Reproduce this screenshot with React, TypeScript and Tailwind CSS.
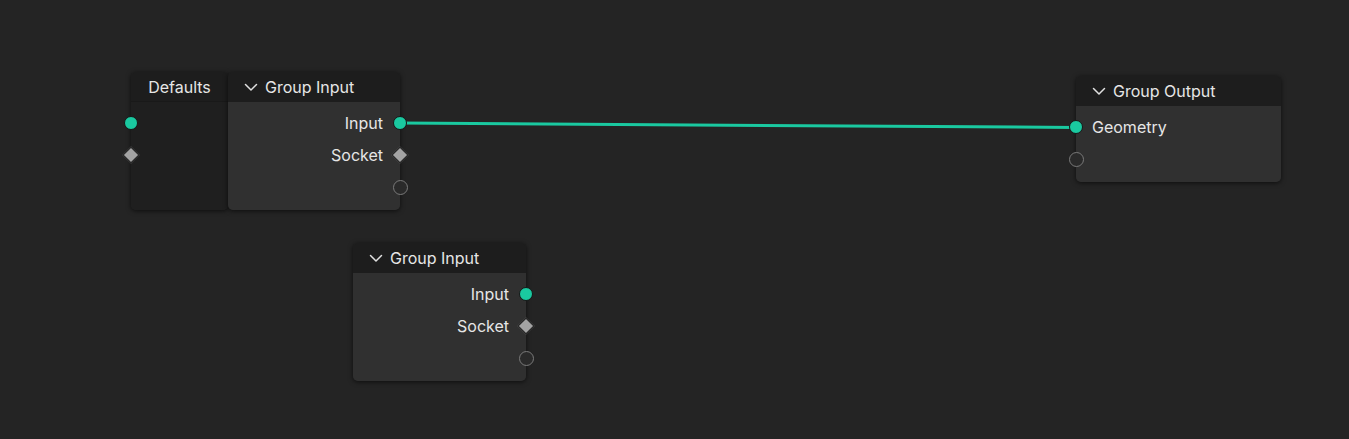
import React from 'react';

type Socket = { label?: string; kind: 'geo' | 'diamond' | 'empty' };

const TEAL = '#1ac9a0';

const SocketDot: React.FC<{ kind: Socket['kind'] }> = ({ kind }) => {
    if (kind === 'geo') {
        return <span className="block w-[14px] h-[14px] rounded-full bg-[#1ac9a0] border border-[#161616]" />;
    }
    if (kind === 'diamond') {
        return <span className="block w-[12px] h-[12px] rotate-45 bg-[#a3a3a3] border border-[#1a1a1a]" />;
    }
    return <span className="block w-[15px] h-[15px] rounded-full border-[1.5px] border-[#7a7a7a] bg-[#2a2a2a]" />;
};

const Chevron = () => (
    <svg width="14" height="14" viewBox="0 0 14 14" className="shrink-0">
        <path d="M1.5 4.5 L7 10 L12.5 4.5" fill="none" stroke="#e0e0e0" strokeWidth="1.5" strokeLinecap="round" strokeLinejoin="round" />
    </svg>
);

interface NodeProps {
    title: string;
    x: number;
    y: number;
    width: number;
    sockets: Socket[];
    side: 'left' | 'right';
}

const Node: React.FC<NodeProps> = ({ title, x, y, width, sockets, side }) => (
    <div
        className="absolute rounded-[5px] shadow-[0_1px_5px_rgba(0,0,0,0.65)]"
        style={{ left: x, top: y, width }}
    >
        <div className="h-[30px] bg-[#1d1d1d] rounded-t-[5px] flex items-center gap-[7px] pl-[16px] text-[16px] text-[#e6e6e6]">
            <Chevron />
            <span>{title}</span>
        </div>
        <div className="bg-[#303030] rounded-b-[5px] pt-[5px] pb-[7px]">
            {sockets.map((s, i) => (
                <div
                    key={i}
                    className={`relative h-[32px] flex items-center text-[16px] text-[#e6e6e6] ${
                        side === 'right' ? 'justify-end pr-[17px]' : 'justify-start pl-[16px]'
                    }`}
                >
                    {s.label && <span>{s.label}</span>}
                    <span
                        className={`absolute top-1/2 -translate-y-1/2 flex items-center justify-center w-[16px] h-[16px] ${
                            side === 'right' ? 'right-[-8px]' : 'left-[-8px]'
                        }`}
                    >
                        <SocketDot kind={s.kind} />
                    </span>
                </div>
            ))}
        </div>
    </div>
);

const inputSockets: Socket[] = [
    { label: 'Input', kind: 'geo' },
    { label: 'Socket', kind: 'diamond' },
    { kind: 'empty' },
];

export default function App() {
    return (
        <div
            className="relative w-[1349px] h-[439px] bg-[#242424] overflow-hidden"
            style={{ fontFamily: 'Inter, "Noto Sans", sans-serif' }}
        >
            <svg className="absolute inset-0" width="1349" height="439">
                <line x1="400" y1="123" x2="1076" y2="127.5" stroke={TEAL} strokeWidth="3" />
            </svg>

            {/* Defaults panel */}
            <div className="absolute left-[131px] top-[72px] w-[97px] h-[138px] rounded-[5px] shadow-[0_1px_5px_rgba(0,0,0,0.65)]">
                <div className="h-[30px] bg-[#1d1d1d] rounded-t-[5px] flex items-center justify-center text-[16px] text-[#e6e6e6] border-b border-[#191919]">
                    Defaults
                </div>
                <div className="h-[108px] bg-[#1f1f1f] rounded-b-[5px] pt-[5px]">
                    {(['geo', 'diamond'] as const).map((k) => (
                        <div key={k} className="relative h-[32px]">
                            <span className="absolute left-[-8px] top-1/2 -translate-y-1/2 flex items-center justify-center w-[16px] h-[16px]">
                                <SocketDot kind={k} />
                            </span>
                        </div>
                    ))}
                </div>
            </div>

            <Node title="Group Input" x={228} y={72} width={172} sockets={inputSockets} side="right" />
            <Node title="Group Input" x={353} y={243} width={173} sockets={inputSockets} side="right" />
            <Node
                title="Group Output"
                x={1076}
                y={76}
                width={205}
                sockets={[{ label: 'Geometry', kind: 'geo' }, { kind: 'empty' }]}
                side="left"
            />
        </div>
    );
}
